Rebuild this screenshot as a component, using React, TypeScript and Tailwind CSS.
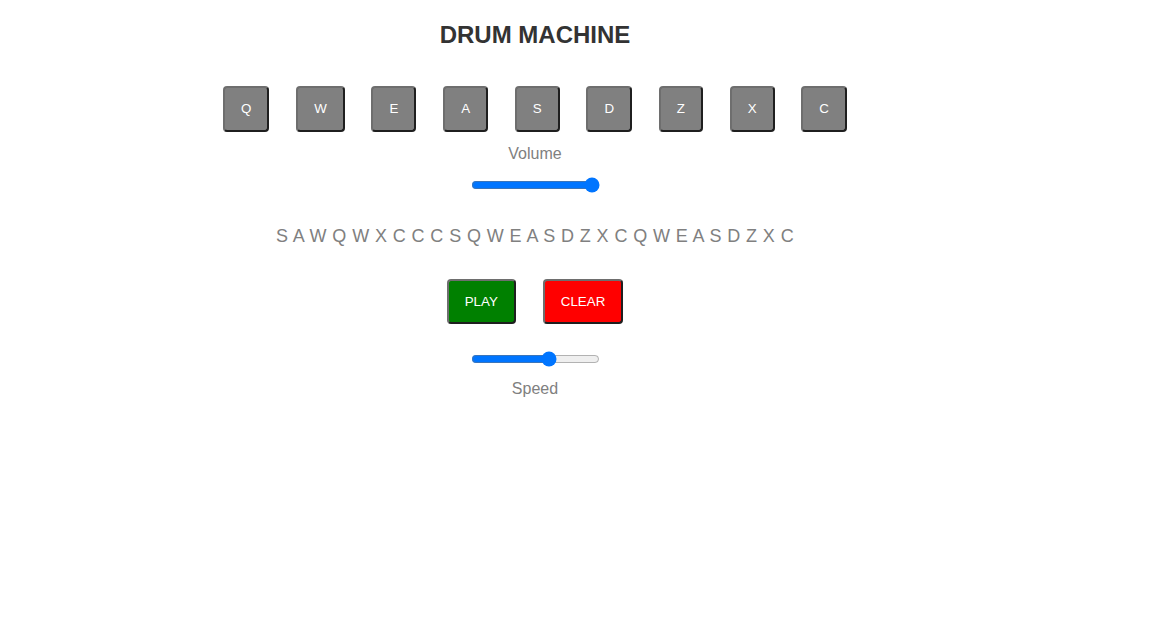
import { useState } from "react";

const keys = ["Q", "W", "E", "A", "S", "D", "Z", "X", "C"];
const sequence = "SAWQWXCCCSQWEASDZXCQWEASDZXC".split("");

const keyBtn =
  "h-[46px] px-4 rounded-[4px] bg-[#808080] text-white text-[13.333px] border-2 border-t-[#6e6e6e] border-l-[#6e6e6e] border-b-[#1f1f1f] border-r-[#1f1f1f]";

const App = () => {
  const [volume, setVolume] = useState(100);
  const [speed, setSpeed] = useState(62.5);

  return (
    <div className="w-[1070px] flex flex-col items-center font-['Liberation_Sans',Arial,sans-serif] bg-white">
      <h1 className="pt-[21px] text-[24px] leading-[28px] font-bold text-[#333333]">
        DRUM MACHINE
      </h1>
      <div className="mt-[37px] flex gap-[26.75px]">
        {keys.map((k) => (
          <button key={k} className={keyBtn}>
            {k}
          </button>
        ))}
      </div>
      <div className="mt-[13px] text-[16px] leading-[18px] text-[#808080]">Volume</div>
      <input
        type="range"
        min={0}
        max={100}
        value={volume}
        onChange={(e) => setVolume(Number(e.target.value))}
        className="mt-[14px] w-[129px] h-[16px] accent-[#0075ff]"
      />
      <div className="mt-[33px] text-[18px] leading-[21px] tracking-[0.4px] text-[#808080]">
        {sequence.join(" ")}
      </div>
      <div className="mt-[32px] flex gap-[27px]">
        <button className="h-[45px] px-4 rounded-[4px] bg-[#008000] text-white text-[13.333px] border-2 border-t-[#6e6e6e] border-l-[#6e6e6e] border-b-[#1f1f1f] border-r-[#1f1f1f]">
          PLAY
        </button>
        <button className="h-[45px] px-4 rounded-[4px] bg-[#ff0000] text-white text-[13.333px] border-2 border-t-[#6e6e6e] border-l-[#6e6e6e] border-b-[#1f1f1f] border-r-[#1f1f1f]">
          CLEAR
        </button>
      </div>
      <input
        type="range"
        min={0}
        max={100}
        step="any"
        value={speed}
        onChange={(e) => setSpeed(Number(e.target.value))}
        className="mt-[27px] w-[129px] h-[16px] accent-[#0075ff]"
      />
      <div className="mt-[13px] text-[16px] leading-[18px] text-[#808080]">Speed</div>
    </div>
  );
};

export default App;
